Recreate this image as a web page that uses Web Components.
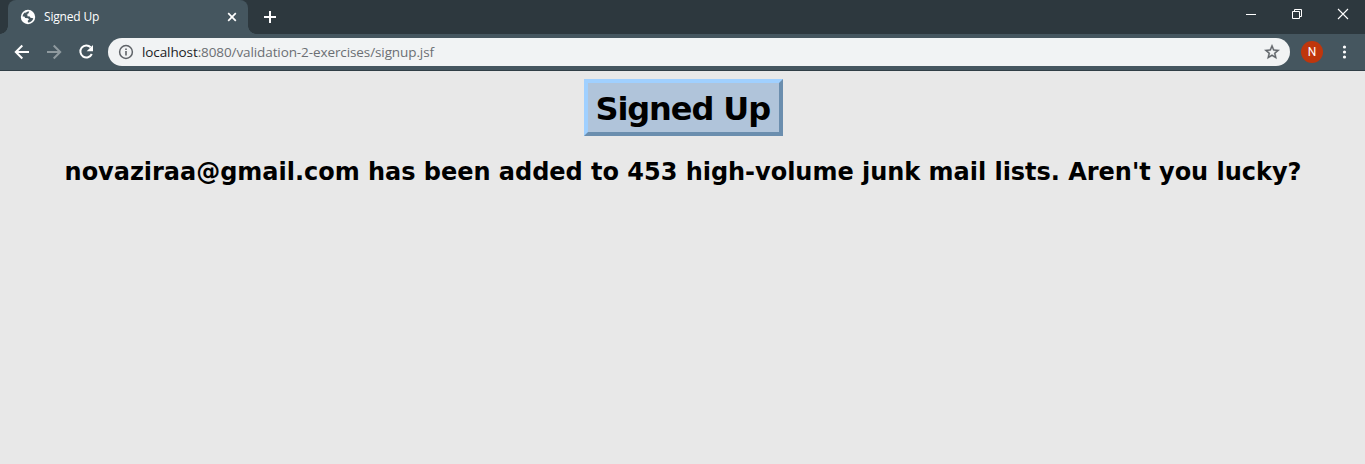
<!DOCTYPE html>
<html lang="en"><head><meta charset="utf-8"><title>Signed Up</title>
<style>html,body{margin:0;height:100%;overflow:hidden}</style></head>
<body>
<browser-window>
  <tab-strip slot="tabs"><browser-tab>Signed Up</browser-tab></tab-strip>
  <nav-bar slot="nav"><address-field><span slot="host">localhost</span>:8080/validation-2-exercises/signup.jsf</address-field></nav-bar>
  <signup-page>
    <title-banner slot="title">Signed Up</title-banner>
    novaziraa@gmail.com has been added to 453 high-volume junk mail lists. Aren't you lucky?
  </signup-page>
</browser-window>
<script>
const define = (name, html) => {
  const t = document.createElement('template');
  t.innerHTML = html;
  customElements.define(name, class extends HTMLElement {
    constructor() { super(); this.attachShadow({mode:'open'}).append(t.content.cloneNode(true)); }
  });
};
define('browser-window', `<style>
:host{display:flex;flex-direction:column;height:100vh;background:#e8e8e8;font-family:"Open Sans","Noto Sans",sans-serif}
</style><slot name="tabs"></slot><slot name="nav"></slot><slot></slot>`);

define('tab-strip', `<style>
:host{display:flex;height:34px;flex:none;background:#2d383e;padding-left:8px;box-sizing:border-box}
svg{display:block;flex:none}
.new{width:44px;height:34px}
.controls{display:flex;margin-left:auto}
</style><slot></slot>
<svg class="new" viewBox="0 0 44 34"><path d="M22 11v12M16 17h12" stroke="#fff" stroke-width="2"/></svg>
<div class="controls">
<svg width="46" height="34" viewBox="0 0 46 34"><path d="M18 14.5h10" stroke="#fff"/></svg>
<svg width="46" height="34" viewBox="0 0 46 34" fill="none" stroke="#fff"><path d="M18.5 11.5h7v7h-7zM20.5 11.5v-2h7v7h-2"/></svg>
<svg width="45" height="34" viewBox="0 0 45 34"><path d="M18 9l10 10M28 9L18 19" stroke="#fff" stroke-width="1.1"/></svg>
</div>`);

define('browser-tab', `<style>
:host{display:flex;position:relative;align-items:center;width:240px;height:34px;box-sizing:border-box;padding:0 10px 0 12px;background:#45565f;border-radius:8px 8px 0 0;color:#fff;font-size:12px;line-height:34px}
:host::before,:host::after{content:"";position:absolute;bottom:0;width:8px;height:8px}
:host::before{left:-8px;background:radial-gradient(circle at 0 0,transparent 7.5px,#45565f 8px)}
:host::after{right:-8px;background:radial-gradient(circle at 100% 0,transparent 7.5px,#45565f 8px)}
.t{flex:1;margin-left:8px;letter-spacing:-.18px}
svg{flex:none;display:block}
</style>
<svg width="16" height="16" viewBox="0 0 16 16"><circle cx="8" cy="8" r="7.2" fill="#fff"/><path d="M9.300 2.500C6.900 2 5.700 3.300 5.800 4.700L7.600 5.600 7.300 7.300 9.800 7.400 10.400 8.800 13.300 9.200C12.800 11.700 10.600 13.500 8 13.500L7.700 11.800 9 10.400 8 9.200 5.200 8.900 4.400 7.600 2.600 7.400C2.700 5.600 3.800 3.900 5.300 3.200L6.200 5.100 8.200 4.800z" fill="#45565f"/></svg>
<span class="t"><slot></slot></span>
<svg width="12" height="12" viewBox="0 0 12 12"><path d="M2.2 2.200l7.600 7.600M9.800 2.200L2.200 9.800" stroke="#fff" stroke-width="1.7"/></svg>`);

define('nav-bar', `<style>
:host{display:flex;align-items:center;height:37px;flex:none;box-sizing:border-box;background:#45565f;border-bottom:1px solid #303e46;padding:0 8px 0 10px}
svg{display:block;flex:none}
.icons{display:flex;gap:8px;margin-right:10px}
.avatar{width:22px;height:22px;border-radius:50%;background:#bf360c;color:#fff;font:12px/22px Roboto,sans-serif;text-align:center;margin:0 10px 0 11px;flex:none}
</style>
<div class="icons">
<svg width="24" height="24" viewBox="0 0 24 24" fill="none" stroke="#fff" stroke-width="2"><path d="M19 12H6M12.300 5.500L5.800 12l6.500 6.500"/></svg>
<svg width="24" height="24" viewBox="0 0 24 24" fill="none" stroke="#8f9a9f" stroke-width="2"><path d="M5 12h13M11.700 5.500l6.500 6.500-6.500 6.500"/></svg>
<svg width="24" height="24" viewBox="0 0 24 24"><path d="M16.700 7.300A6 6 0 1 0 17.800 14" fill="none" stroke="#fff" stroke-width="2"/><path d="M19 5v6.300h-6.300z" fill="#fff"/></svg>
</div>
<slot></slot><div class="avatar">N</div>
<svg width="24" height="24" viewBox="0 0 24 24" fill="#fff"><circle cx="11.500" cy="7" r="1.600"/><circle cx="11.500" cy="12" r="1.600"/><circle cx="11.500" cy="17" r="1.600"/></svg>`);

define('address-field', `<style>
:host{display:flex;align-items:center;flex:1;height:28px;box-sizing:border-box;border-radius:14px;background:#f1f3f4;padding:0 9px 0 10px;color:#6b6f73;font-size:13.500px;line-height:28px}
::slotted(span){color:#202124}
.url{flex:1;margin-left:8px;white-space:nowrap;letter-spacing:-.1px}
svg{display:block;flex:none}
</style>
<svg width="16" height="16" viewBox="0 0 16 16"><circle cx="8" cy="8" r="6.400" fill="none" stroke="#5f6368" stroke-width="1.500"/><path d="M7.200 7h1.600v4.500H7.200zM7.200 4.400h1.600v1.500H7.200z" fill="#5f6368"/></svg>
<span class="url"><slot name="host"></slot><slot></slot></span>
<svg width="18" height="18" viewBox="0 0 24 24" fill="#5f6368" stroke="#5f6368" stroke-width=".5"><path d="M22 9.240l-7.190-.62L12 2 9.190 8.630 2 9.240l5.460 4.730L5.820 21 12 17.270 18.180 21l-1.630-7.030L22 9.240zM12 15.400l-3.760 2.270 1-4.280-3.320-2.880 4.380-.38L12 6.100l1.710 4.040 4.380.38-3.320 2.880 1 4.280L12 15.400z"/></svg>`);

define('signup-page', `<style>
:host{display:flex;flex-direction:column;align-items:center;flex:1;padding-top:8px;background:#e8e8e8;color:#000;font-family:"DejaVu Sans",sans-serif}
h2{font-size:24px;line-height:30px;letter-spacing:-.025px;margin:21px 0 0;padding-left:1px;white-space:nowrap}
</style><slot name="title"></slot><h2><slot></slot></h2>`);

define('title-banner', `<style>
:host{display:block;box-sizing:border-box;width:199px;height:57px;background:#b0c4da;border:4px solid;border-color:#a0d0ff #6b8eae #6b8eae #a0d0ff;margin-left:2px}
h1{margin:0;font-size:32px;line-height:53px;letter-spacing:-1.100px;padding-left:7.500px;white-space:nowrap}
</style><h1><slot></slot></h1>`);
</script>
</body></html>
